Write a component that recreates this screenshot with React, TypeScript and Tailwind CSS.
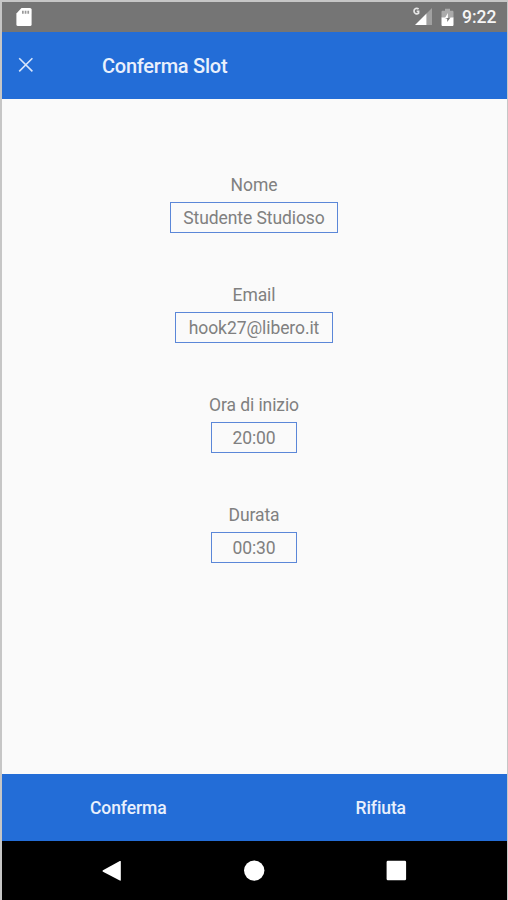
const fields = [
  { label: 'Nome', value: 'Studente Studioso', width: 'w-[168px]' },
  { label: 'Email', value: 'hook27@libero.it', width: 'w-[158px]' },
  { label: 'Ora di inizio', value: '20:00', width: 'w-[86px]' },
  { label: 'Durata', value: '00:30', width: 'w-[86px]' },
]

function StatusBar() {
  return (
    <div className="flex h-[30px] shrink-0 items-center bg-[#757575] pl-[14px] pr-[9px] text-white">
      <svg className="-mt-px" width="16" height="18" viewBox="0 0 16 18" aria-hidden="true">
        <path d="M5.5 0H14a1.6 1.6 0 0 1 1.6 1.6v14.8A1.6 1.6 0 0 1 14 18H2a1.6 1.6 0 0 1-1.6-1.6V5.4z" fill="#fff" />
        <path d="M6 2.8h1.7v3H6zM8.7 2.8h1.7v3H8.7zM11.4 2.8h1.7v3h-1.7z" fill="#999" />
      </svg>

      <div className="ml-auto flex items-center">
        {/* Signal */}
        <svg width="20" height="20" viewBox="0 0 20 20" aria-hidden="true">
          <path d="M19 1V18H13.5V6.5z" fill="#a0a0a0" />
          <path d="M13.5 6.5V18H2z" fill="#fff" />
          <path d="M5.6 2C3.9.6 1 1.3 1 4.1s3.1 3.5 4.6 2V4.4H3.7" fill="none" stroke="#e6e6e6" strokeWidth="1.7" />
        </svg>
        {/* Battery */}
        <svg className="ml-[8px]" width="13" height="19" viewBox="0 0 13 19" aria-hidden="true">
          <path d="M4 .8h5v2h2.2c.8 0 1.3.5 1.3 1.3V10H.5V4.1c0-.8.5-1.3 1.3-1.3H4z" fill="#aaa" />
          <path d="M.5 9.5h12v7.3c0 .8-.5 1.3-1.3 1.3H1.8c-.8 0-1.3-.5-1.3-1.3z" fill="#fff" />
          <path d="M7.2 9.5H9.5L6.2 14v-3.2H4z" fill="#757575" />
          <path d="M6.9 5 4 9.9h2.9z" fill="#fff" />
        </svg>
        <span className="ml-[8px] w-[36px] whitespace-nowrap text-[17.5px] font-medium leading-[30px] text-[#f5f5f5]">9:22</span>
      </div>
    </div>
  )
}

function NavigationBar() {
  return (
    <nav className="flex h-[59px] shrink-0 items-center justify-between bg-black px-[99px]">
      <button aria-label="Back">
        <svg width="22" height="22" viewBox="0 0 22 22">
          <path d="M19.8 1.6v18.4q0 1-1 .5L2 11.8q-1.2-.8 0-1.6l16.8-9.1q1-.5 1 .5z" fill="#fff" />
        </svg>
      </button>
      <button aria-label="Home">
        <svg width="22" height="22" viewBox="0 0 22 22">
          <circle cx="10.2" cy="10.6" r="10.2" fill="#fff" />
        </svg>
      </button>
      <button aria-label="Recent apps">
        <svg width="22" height="22" viewBox="0 0 22 22">
          <rect x="0.6" y="0.8" width="19.5" height="19.5" rx="1.3" fill="#fff" />
        </svg>
      </button>
    </nav>
  )
}

export default function App() {
  return (
    <div className="flex h-[900px] w-[508px] flex-col overflow-hidden border-l-2 border-r border-t-2 border-[#c6c6c6] bg-[#fafafa] font-['Roboto',sans-serif]">
      <StatusBar />

      <header className="flex h-[67px] shrink-0 items-center bg-[#236dd7] pl-[16px] text-[#e9f0fc]">
        <button aria-label="Close" className="-mt-[2px]">
          <svg width="16" height="16" viewBox="0 0 16 16">
            <path d="m1.2 1.2 13.2 13.2M14.4 1.2 1.2 14.4" fill="none" stroke="#d8e5fa" strokeWidth="1.6" />
          </svg>
        </button>
        <h1 className="ml-[68px] pt-px text-[20px] font-medium tracking-[-0.25px]">Conferma Slot</h1>
      </header>

      <main className="flex flex-1 flex-col items-start gap-[47px] pt-[71px] text-[17.5px] tracking-[-0.08px] text-[#808080]">
        {fields.map(field => (
          <div key={field.label} className="flex h-[63px] w-[504px] flex-col items-center pt-[2px]">
            <span className="h-[30px] shrink-0 leading-[27px]">{field.label}</span>
            <div className={`flex h-[31px] shrink-0 items-center justify-center border border-[#5b87d8] pt-[2px] ${field.width}`}>
              {field.value}
            </div>
          </div>
        ))}
      </main>

      <div className="grid h-[67px] shrink-0 grid-cols-2 bg-[#236dd7] pt-[2px] text-[17.5px] font-medium tracking-[-0.1px] text-[#e9f0fc]">
        <button>Conferma</button>
        <button>Rifiuta</button>
      </div>

      <NavigationBar />
    </div>
  )
}
